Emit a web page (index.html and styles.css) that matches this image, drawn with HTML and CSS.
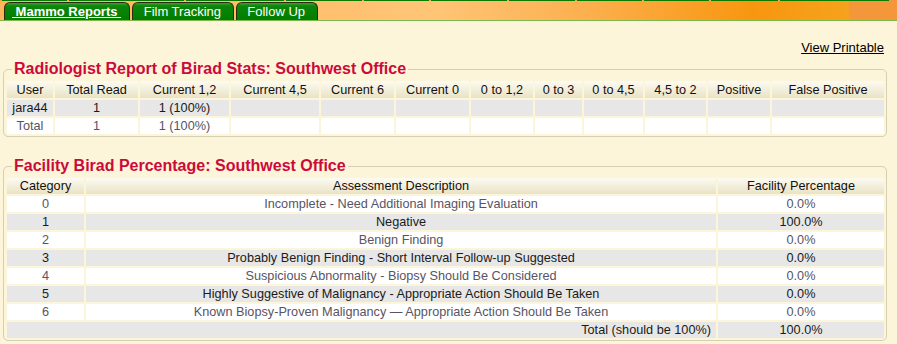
FILE: index.html
```html
<!DOCTYPE html>
<html lang="en">
<head>
    <meta charset="UTF-8">
    <title>Mammo Reports</title>
    <link rel="stylesheet" href="styles.css">
</head>
<body>
    <!-- Top tab bar -->
    <div class="topbar">
        <nav class="tabs">
            <a class="tab current" href="#">&nbsp;Mammo Reports&nbsp;</a>
            <a class="tab" href="#">&nbsp;Film Tracking&nbsp;</a>
            <a class="tab" href="#">&nbsp;Follow Up&nbsp;</a>
        </nav>
    </div>

    <div class="content">
        <div class="print-row"><a href="#">View Printable</a></div>

        <!-- Radiologist stats -->
        <fieldset class="report">
            <legend>Radiologist Report of Birad Stats: Southwest Office</legend>
            <table class="stats">
                <colgroup>
                    <col class="c-user"><col class="c-total"><col class="c-cur12"><col class="c-cur45">
                    <col class="c-cur6"><col class="c-cur0"><col class="c-to12"><col class="c-to3">
                    <col class="c-to45"><col class="c-45to2"><col class="c-pos"><col class="c-false">
                </colgroup>
                <tr>
                    <th>User</th><th>Total Read</th><th>Current 1,2</th><th>Current 4,5</th>
                    <th>Current 6</th><th>Current 0</th><th>0 to 1,2</th><th>0 to 3</th>
                    <th>0 to 4,5</th><th>4,5 to 2</th><th>Positive</th><th>False Positive</th>
                </tr>
                <tr class="dark">
                    <td>jara44</td><td>1</td><td>1 (100%)</td><td></td><td></td><td></td>
                    <td></td><td></td><td></td><td></td><td></td><td></td>
                </tr>
                <tr class="light">
                    <td>Total</td><td>1</td><td>1 (100%)</td><td></td><td></td><td></td>
                    <td></td><td></td><td></td><td></td><td></td><td></td>
                </tr>
            </table>
        </fieldset>

        <!-- Facility percentages -->
        <fieldset class="report">
            <legend>Facility Birad Percentage: Southwest Office</legend>
            <table class="facility">
                <colgroup>
                    <col class="c-cat"><col class="c-desc"><col class="c-pct">
                </colgroup>
                <tr>
                    <th>Category</th><th>Assessment Description</th><th>Facility Percentage</th>
                </tr>
                <tr class="light"><td>0</td><td>Incomplete - Need Additional Imaging Evaluation</td><td>0.0%</td></tr>
                <tr class="dark"><td>1</td><td>Negative</td><td>100.0%</td></tr>
                <tr class="light"><td>2</td><td>Benign Finding</td><td>0.0%</td></tr>
                <tr class="dark"><td>3</td><td>Probably Benign Finding - Short Interval Follow-up Suggested</td><td>0.0%</td></tr>
                <tr class="light"><td>4</td><td>Suspicious Abnormality - Biopsy Should Be Considered</td><td>0.0%</td></tr>
                <tr class="dark"><td>5</td><td>Highly Suggestive of Malignancy - Appropriate Action Should Be Taken</td><td>0.0%</td></tr>
                <tr class="light"><td>6</td><td>Known Biopsy-Proven Malignancy — Appropriate Action Should Be Taken</td><td>0.0%</td></tr>
                <tr class="dark"><td colspan="2" class="total-label">Total (should be 100%)</td><td>100.0%</td></tr>
            </table>
        </fieldset>
    </div>
</body>
</html>
```

FILE: styles.css
```css
/* Page */
body {
    margin: 0;
    background-color: #fcf5d9;
    font-family: "Liberation Sans", Arial, sans-serif;
    color: #000000;
}

/* Orange bar with the tabs */
.topbar {
    height: 20px;
    border-bottom: 1px solid #80b850;
    background:
        linear-gradient(to right,
            #f6a041 0, #f6a041 2px,
            #0b7a00 2px, #0b7a00 67px, #f7a94c 67px, #f7a94c 69px,
            #0b7a00 69px, #0b7a00 184px, #f7a94c 184px, #f7a94c 186px,
            #0b7a00 186px, #0b7a00 284px, #f7a94c 284px, #f7a94c 286px,
            #0b7a00 286px, #0b7a00 362px, #f7a94c 362px, #f7a94c 364px,
            #0b7a00 364px, #0b7a00 429px, #f7a94c 429px, #f7a94c 431px,
            #0b7a00 431px, #0b7a00 507px, #f7a94c 507px, #f7a94c 509px,
            #0b7a00 509px, #0b7a00 575px, #f7a94c 575px, #f7a94c 577px,
            #0b7a00 577px, #0b7a00 642px, #f7a94c 642px, #f7a94c 644px,
            #0b7a00 644px, #0b7a00 709px, #f7a94c 709px, #f7a94c 711px,
            #0b7a00 711px, #0b7a00 778px, #f7a94c 778px, #f7a94c 780px,
            #0b7a00 780px, #0b7a00 889px, #f3973a 889px) top left / 100% 1px no-repeat,
        linear-gradient(to right, #ffb55c 0, #ffbf6e 35%, #ffc577 48%, #fcb04f 65%, #f8960f 84%, #f6a21c 94.6%, #f3973a 94.6%, #f3973a 100%);
}

.tabs {
    display: flex;
    align-items: flex-end;
    gap: 2px;
    height: 20px;
    padding-left: 4px;
}

.tab {
    height: 17px;
    line-height: 17px;
    padding: 0 8px 0 7px;
    border: 1px solid #2e2a10;
    border-bottom: none;
    border-radius: 6px 6px 0 0;
    background: linear-gradient(#3d9f35 0, #0c860a 3px, #007e00 100%);
    color: #ffffff;
    font-size: 13px;
    text-decoration: none;
    white-space: nowrap;
}

.tab.current {
    font-weight: bold;
    text-decoration: underline;
}

/* Content */
.content {
    margin: 0 10px 0 3px;
}

.print-row {
    margin-top: 19px;
    margin-bottom: 4px;
    padding-right: 3px;
    height: 16px;
    line-height: 16px;
    text-align: right;
    font-size: 13px;
}

.print-row a {
    color: #000000;
}

.report {
    margin: 0;
    padding: 1px 0 0 1px;
    border: 1px solid #d5cfb4;
    border-radius: 5px;
}

.report + .report {
    margin-top: 20px;
}

.report legend {
    margin-left: 7px;
    padding: 0 2px;
    font-size: 16px;
    line-height: 18px;
    font-weight: bold;
    color: #cc0a3a;
}

/* Tables */
table {
    width: 100%;
    table-layout: fixed;
    border-collapse: separate;
    border-spacing: 2px;
    font-size: 12.7px;
}

th, td {
    height: 16px;
    padding: 0;
    line-height: 16px;
    text-align: center;
    white-space: nowrap;
}

th {
    font-weight: normal;
    color: #111111;
    background: linear-gradient(#fdfbf2, #e9e2c5);
}

.stats th {
    height: 17px;
}

tr.light td {
    background-color: #ffffff;
    color: #595463;
}

tr.dark td {
    background-color: #e7e7e7;
    color: #1a1a1a;
}

td.total-label {
    text-align: right;
    padding-right: 5px;
}

/* Column widths, stats table */
.c-user { width: 46px; }
.c-total { width: 83px; }
.c-cur12 { width: 89px; }
.c-cur45 { width: 88px; }
.c-cur6 { width: 73px; }
.c-cur0 { width: 73px; }
.c-to12 { width: 62px; }
.c-to3 { width: 47px; }
.c-to45 { width: 59px; }
.c-45to2 { width: 61px; }
.c-pos { width: 62px; }
.c-false { width: 112px; }

/* Column widths, facility table */
.c-cat { width: 77px; }
.c-desc { width: 630px; }
.c-pct { width: 166px; }
```
